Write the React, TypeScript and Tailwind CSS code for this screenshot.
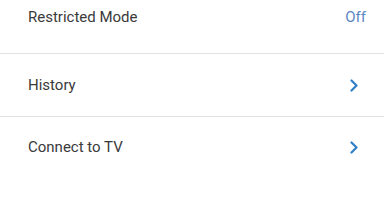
import React from "react";

function Chevron() {
  return (
    <svg width="10" height="13" viewBox="0 0 10 13" className="shrink-0">
      <path d="M2.5 1.5 L7.5 6.5 L2.5 11.5" fill="none" stroke="#2f7fc6" strokeWidth="2.2" strokeLinecap="round" strokeLinejoin="round" />
    </svg>
  );
}

export default function App() {
  return (
    <div className="w-[384px] h-[216px] bg-white overflow-hidden" style={{ fontFamily: "Roboto, 'Noto Sans', sans-serif" }}>
      <div className="h-[53px] flex items-start justify-between pl-[28px] pr-[18px] pt-[7px]">
        <span className="text-[15px] leading-[20px] text-[#3a3a3a]">Restricted Mode</span>
        <span className="text-[15px] leading-[20px] text-[#5c86c4]">Off</span>
      </div>
      <div className="h-px bg-[#e2e2e2]" />
      <div className="h-[62px] flex items-center justify-between pl-[28px] pr-[25px]">
        <span className="text-[15px] leading-[20px] text-[#3a3a3a]">History</span>
        <Chevron />
      </div>
      <div className="h-px bg-[#e2e2e2]" />
      <div className="h-[60px] flex items-center justify-between pl-[28px] pr-[25px]">
        <span className="text-[15px] leading-[20px] text-[#3a3a3a]">Connect to TV</span>
        <Chevron />
      </div>
    </div>
  );
}
